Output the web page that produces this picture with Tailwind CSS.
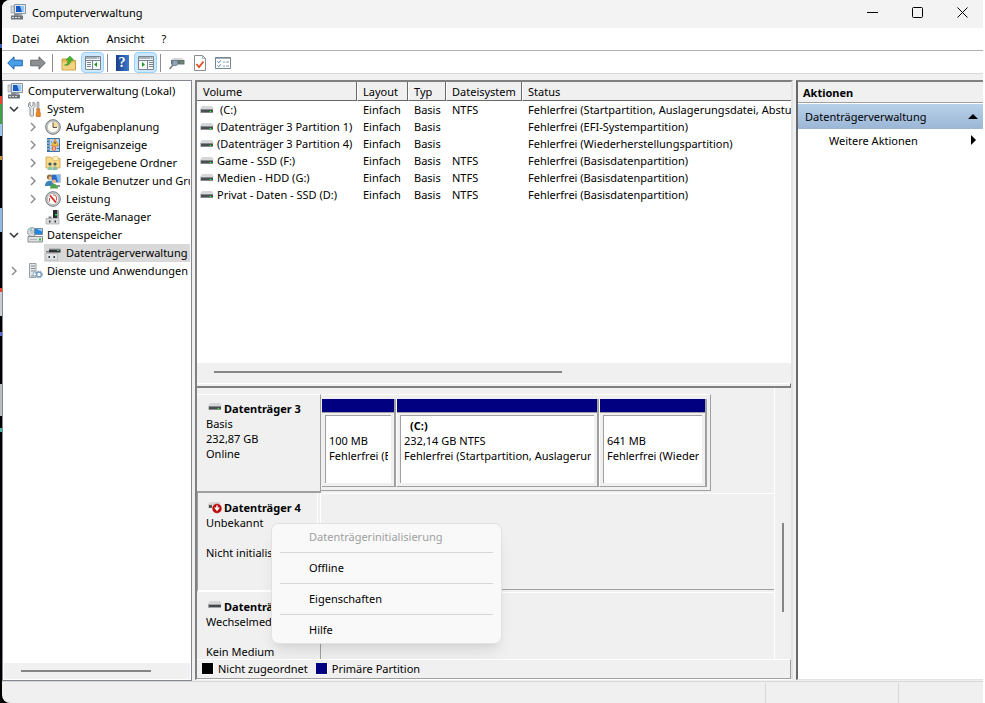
<!DOCTYPE html>
<html lang="de">
<head>
    <meta charset="utf-8">
    <title>Computerverwaltung</title>
    <script src="https://cdn.jsdelivr.net/npm/@tailwindcss/browser@4"></script>
</head>
<body class="h-screen overflow-hidden flex bg-white text-black text-[11px] leading-[15px] font-['Noto_Sans','Open_Sans',sans-serif]">
    <!-- Icon set -->
    <svg class="hidden">
        <symbol id="computer" viewBox="0 0 16 16">
            <path d="M1 2h3v7H1z" fill="#d5dbe0" stroke="#8b949b" stroke-width=".6"/>
            <path d="M4.500.5h11v9h-11z" fill="#dfe6ec" stroke="#8796a5"/>
            <path d="M6 2h8v6H6z" fill="#1a59c4"/>
            <path d="M10 2h4v6h-2z" fill="#8fc6f5"/>
            <path d="M8 10h4v1.500H8z" fill="#9aa4ad"/>
            <path d="M1 11.500h12v4H1z" fill="#6c7378"/>
            <path d="M4 10h5v2H4z" fill="#83898d"/>
            <path d="M2 13.500h2m1 0h2m1 0h2" stroke="#d8dcdf"/>
        </symbol>
        <symbol id="tools" viewBox="0 0 16 16">
            <path d="M3 1v3l1.500 1.500L6 4V1l2 1.500v3L6.500 7v7.500c0 1-3.500 1-3.500 0V7L1.500 5.500v-3z" fill="#e3e6e8" stroke="#767c80" stroke-width=".8"/>
            <path d="M10 1h2v7h-2z" fill="#c3c8cb" stroke="#6f767b" stroke-width=".5"/>
            <path d="M9.500 8h3.500l-.5 2 .8 2v3.500H9.200V12l.8-2z" fill="#f08a24" stroke="#b65a0c" stroke-width=".6"/>
        </symbol>
        <symbol id="clock" viewBox="0 0 16 16">
            <circle cx="8" cy="8" r="7.300" fill="#c9cdd0" stroke="#70767a"/>
            <circle cx="8" cy="8" r="5.600" fill="#fffdf2" stroke="#a5a9ac" stroke-width=".6"/>
            <path d="M8 8V2.800A5.200 5.200 0 0 1 13.200 8z" fill="#f7d896"/>
            <path d="M8 3.500V8.500h4" fill="none" stroke="#555"/>
        </symbol>
        <symbol id="events" viewBox="0 0 16 16">
            <path d="M2.500 1.500h12v13h-12z" fill="#b9d4ee" stroke="#3d6f9f"/>
            <path d="M2 1h2.500v14H2z" fill="#386a9d"/>
            <path d="M1 3h3M1 6h3M1 9h3M1 12h3" stroke="#d8e1ea"/>
            <path d="M10 2l3.500 7h-7z" fill="#ffc13d" stroke="#c57818" stroke-width=".6"/>
            <path d="M10 4.500v2.500" stroke="#333"/>
            <circle cx="9" cy="11.500" r="2.300" fill="#e0662d"/>
            <path d="M9 10v3" stroke="#fff"/>
            <path d="M6 5h1M12 11.500h2" stroke="#3d6f9f"/>
        </symbol>
        <symbol id="shared" viewBox="0 0 16 16">
            <path d="M1 2h5l1 1.500h8V13H1z" fill="#f7d988" stroke="#c59a37" stroke-width=".7"/>
            <path d="M8 1.500h5v4H8z" fill="#fff1c0" stroke="#d5af55" stroke-width=".5"/>
            <circle cx="5" cy="9" r="1.600" fill="#35515c"/>
            <circle cx="10" cy="9" r="1.600" fill="#4a5660"/>
            <path d="M2.500 15c0-5 5-5 5 0z" fill="#8cc7a9"/>
            <path d="M7.500 15c0-5 5-5 5 0z" fill="#8cbfa5"/>
        </symbol>
        <symbol id="users" viewBox="0 0 16 16">
            <path d="M6.500 1.500h9v8h-9z" fill="#286bcd" stroke="#bac7d4"/>
            <path d="M11 2h4v7h-2z" fill="#7db9ef"/>
            <circle cx="4.500" cy="4" r="2.600" fill="#8f6a43"/>
            <circle cx="5.200" cy="5" r="1.700" fill="#e7ba8d"/>
            <path d="M0 13c0-7 9-7 9 0z" fill="#3d84bb"/>
            <circle cx="9" cy="8.500" r="2.100" fill="#e7ba8d"/>
            <path d="M5 15.500c0-6 8-6 8 0z" fill="#52a44a"/>
            <path d="M12 12h3v2h-3z" fill="#8d969d"/>
        </symbol>
        <symbol id="gauge" viewBox="0 0 16 16">
            <circle cx="8" cy="8" r="7.300" fill="#d5d8da" stroke="#70767a"/>
            <circle cx="8" cy="8" r="5.600" fill="#fff" stroke="#8f9598" stroke-width=".6"/>
            <path d="M5 4.500l6 7" stroke="#d62516" stroke-width="1.800"/>
            <path d="M4.500 10.500V7m3.500-3h2L11.500 6v3.500" fill="none" stroke="#c4331f" stroke-width=".8"/>
        </symbol>
        <symbol id="device" viewBox="0 0 16 16">
            <path d="M8 1h4.500v8H8z" fill="#292c2e"/>
            <path d="M12.500 1H14v8h-1.500z" fill="#a2a6a9"/>
            <path d="M10 5h2v1.500h-2z" fill="#27d637"/>
            <path d="M3.500 7.500h3v2h-3z" fill="#777c80"/>
            <path d="M1 9.500h13v5.500H1z" fill="#d7d9da" stroke="#9b9fa1" stroke-width=".6"/>
            <path d="M4 11.500h1.500v2H4zm5.500 0H11v2H9.500z" fill="#35383a"/>
        </symbol>
        <symbol id="storage" viewBox="0 0 16 16">
            <circle cx="5" cy="5" r="4.500" fill="#dadddf" stroke="#7b8286" stroke-width=".7"/>
            <path d="M5 5L1.500 2.500A4.500 4.500 0 0 1 5 .5z" fill="#9cc"/>
            <circle cx="5" cy="5" r="1.300" fill="#fff" stroke="#7b8286" stroke-width=".6"/>
            <path d="M7.500 1.500h8v6h-8z" fill="#2485dc" stroke="#7a8d9e"/>
            <path d="M10 2h5v2.500z" fill="#98d2fb"/>
            <path d="M1 9.500h14.500V15H1z" fill="#dcdfe1" stroke="#71777b" stroke-width=".8"/>
            <path d="M3 12.500h7" stroke="#b0b4b6"/>
            <path d="M12 11.500h2v2h-2z" fill="#22bf35"/>
        </symbol>
        <symbol id="diskmgr" viewBox="0 0 16 16">
            <path d="M4 3h11.500v1.500H4z" fill="#b9bcbe"/>
            <path d="M4 4.500h11.500v3H4z" fill="#303335"/>
            <path d="M12 5.500h2" stroke="#62b56b"/>
            <path d="M1 8.500h11.500V15H1z" fill="#e3e4e5" stroke="#a1a4a6" stroke-width=".6"/>
            <path d="M3.500 11H5v2H3.500zm5 0H10v2H8.500z" fill="#35383a"/>
            <path d="M1 6h3v1.500H1z" fill="#777c80"/>
        </symbol>
        <symbol id="services" viewBox="0 0 16 16">
            <path d="M2.500.5H9v14H2.500z" fill="#e3e6e8" stroke="#81888d" stroke-width=".8"/>
            <path d="M4 3h4M4 5.500h4M4 8h4M4 13h3" stroke="#858d92"/>
            <circle cx="8" cy="11" r="1.800" fill="#fff" stroke="#7ba0c2" stroke-width="1.200" stroke-dasharray="1.300 .5"/>
            <circle cx="12" cy="11.500" r="2.400" fill="#fff" stroke="#7ba0c2" stroke-width="1.500"/>
            <circle cx="12" cy="11.500" r="3.400" fill="none" stroke="#7ba0c2" stroke-dasharray="1.400 1.400"/>
        </symbol>
        <symbol id="drive" viewBox="0 0 14 8">
            <path d="M2 0h10l2 3H0z" fill="#d5d7d8"/>
            <path d="M0 3h13v4H0z" fill="#c4c6c8"/>
            <path d="M1 3.500h12v3H1z" fill="#4a4e51"/>
            <path d="M10 5h1v1h-1z" fill="#37f24b"/>
            <path d="M9 5h1v1H9zm2 0h1v1h-1z" fill="#218b2c"/>
        </symbol>
        <symbol id="drive-off" viewBox="0 0 14 13">
            <path d="M2 1h10v3H0z" fill="#d5d7d8"/>
            <path d="M0 3h4v4H0z" fill="#ccc"/>
            <path d="M1 4h3v3H1z" fill="#555"/>
            <circle cx="9" cy="7.500" r="4.900" fill="#b90b0b" stroke="#fff" stroke-width=".4"/>
            <path d="M8.250 4.500h1.500v2h2.250L9 10.200 6 6.500h2.250z" fill="#fff"/>
        </symbol>
        <symbol id="drive-rem" viewBox="0 0 14 8">
            <path d="M2 0h10l2 3H0z" fill="#d5d7d8"/>
            <path d="M0 3h13v4H0z" fill="#a4a7a9"/>
            <path d="M1 4h12v2H1z" fill="#44484b"/>
        </symbol>
        <symbol id="arrow" viewBox="0 0 16 14">
            <path d="M.7 7L7 .8v3.400h8.300v5.600H7v3.400z"/>
        </symbol>
        <symbol id="folder-up" viewBox="0 0 16 16">
            <path d="M1 4h5l1 1.500h7.500V15H1z" fill="#e9bd56" stroke="#b88d30" stroke-width=".8"/>
            <path d="M1.500 7.500h12.500V14.500H1.500z" fill="#f3d382"/>
            <path d="M3.500 10c2.500 0 3.500-2 3.500-5H5L9 1l3.500 4H10c0 4-3 6-6.500 5z" fill="#42b82d" stroke="#2b8120" stroke-width=".5"/>
        </symbol>
        <symbol id="panel" viewBox="0 0 16 14">
            <path d="M.5.5h15v13H.5z" fill="#f5f7f8" stroke="#76858f"/>
            <path d="M1 1h14v2H1z" fill="#a8b2b9"/>
            <path d="M12 2h1m1 0h1" stroke="#fff"/>
            <path d="M1 4.500h14" stroke="#76858f"/>
        </symbol>
        <symbol id="chev-down" viewBox="0 0 10 6">
            <path d="M1 1l4 4 4-4" fill="none" stroke="#333" stroke-width="1.500"/>
        </symbol>
        <symbol id="chev-right" viewBox="0 0 6 10">
            <path d="M1 1l4 4-4 4" fill="none" stroke="#888" stroke-width="1.400"/>
        </symbol>
    </svg>

    <!-- Desktop strip left of the window -->
    <div class="w-0.5 shrink-0 bg-black">
        <div class="mt-11 h-1 bg-[#3b5bb5]"></div>
        <div class="mt-12 h-2 bg-[#e8452c]"></div>
        <div class="h-5 bg-[#3fa046]"></div>
        <div class="h-3 bg-[#9cc7ec]"></div>
        <div class="mt-5 h-1 bg-[#c98b3a]"></div>
        <div class="mt-12 h-6 bg-[#8fbbe4]"></div>
        <div class="mt-14 h-1 bg-[#e8452c]"></div>
        <div class="h-6 bg-[#c8ced4]"></div>
        <div class="mt-4 h-1 bg-[#5a6ad0]"></div>
        <div class="mt-12 h-8 bg-[#b9bcc0]"></div>
        <div class="mt-3 h-1 bg-[#4ab0a0]"></div>
    </div>

    <div class="flex-1 min-w-0 mr-0.5 bg-black">
    <div class="h-full flex flex-col rounded-l-lg overflow-hidden bg-[#f0f0f0]">
        <!-- Title bar -->
        <header class="h-7 shrink-0 flex items-center bg-[#f3f3f3] pl-2 pb-1">
            <svg class="size-4 mr-1.5"><use href="#computer"/></svg>
            <h1 class="flex-1">Computerverwaltung</h1>
            <button aria-label="Minimieren" class="w-[45px] h-6 flex items-center justify-center"><svg class="w-[11px] h-[11px]" viewBox="0 0 11 11"><path d="M0 5.500h11" stroke="#000"/></svg></button>
            <button aria-label="Maximieren" class="w-[45px] h-6 flex items-center justify-center"><svg class="w-[11px] h-[11px]" viewBox="0 0 11 11"><rect x=".5" y=".5" width="10" height="10" rx="1" fill="none" stroke="#000"/></svg></button>
            <button aria-label="Schließen" class="w-[41px] h-6 ml-0.5 flex items-center justify-center"><svg class="w-[11px] h-[11px]" viewBox="0 0 11 11"><path d="M.5.5l10 10m0-10l-10 10" stroke="#000"/></svg></button>
        </header>

        <!-- Menu bar -->
        <nav class="h-[23px] shrink-0 flex items-center gap-[17px] bg-white border-b border-[#b0b0b0] pl-2.5 pb-0.5">
            <button>Datei</button>
            <button>Aktion</button>
            <button>Ansicht</button>
            <button>?</button>
        </nav>

        <!-- Toolbar -->
        <div class="h-[23px] shrink-0 flex items-center gap-px bg-white border-b border-[#d9d9d9] pl-0.5 pt-px">
            <button aria-label="Zurück" class="w-[22px] flex justify-center"><svg class="w-4 h-3.5 fill-[#4a9fe8] stroke-[#1c62ad]"><use href="#arrow"/></svg></button>
            <button aria-label="Vorwärts" class="w-[22px] flex justify-center"><svg class="w-4 h-3.5 -scale-x-100 fill-[#8d9093] stroke-[#66696c]"><use href="#arrow"/></svg></button>
            <div class="w-px h-[18px] ml-0.5 mr-1 bg-[#8d8d8d]"></div>
            <button aria-label="Übergeordnet" class="w-[22px] flex justify-center"><svg class="size-4"><use href="#folder-up"/></svg></button>
            <button aria-label="Konsolenstruktur" class="w-[23px] h-[21px] flex items-center justify-center rounded-sm border border-[#99d1ff] bg-[#cce8ff]">
                <svg class="w-4 h-3.5 shrink-0" viewBox="0 0 16 14"><use href="#panel"/><path d="M7.500 5v8M2 6.500h4M2 8.500h4M2 10.500h4" stroke="#76858f"/><path d="M12 6v5L9 8.500z" fill="#219a28"/></svg>
            </button>
            <div class="w-px h-[18px] ml-0.5 mr-0.5 bg-[#8d8d8d]"></div>
            <button aria-label="Hilfe" class="w-[22px] flex justify-center"><span class="w-[13px] h-4 bg-linear-to-r from-[#1c3f87] to-[#3c79cf] text-white text-[14px] leading-4 font-bold font-['Liberation_Serif',serif]">?</span></button>
            <button aria-label="Aktionsbereich" class="w-[23px] h-[21px] flex items-center justify-center rounded-sm border border-[#99d1ff] bg-[#cce8ff]">
                <svg class="w-4 h-3.5 shrink-0" viewBox="0 0 16 14"><use href="#panel"/><path d="M9.500 5v8M11 6.500h4M11 8.500h4M11 10.500h4" stroke="#76858f"/><path d="M4 6v5l3-2.500z" fill="#219a28"/></svg>
            </button>
            <div class="w-px h-[18px] ml-0.5 mr-1 bg-[#8d8d8d]"></div>
            <button aria-label="Datenträger" class="w-[22px] flex justify-center">
                <svg class="size-4" viewBox="0 0 16 16"><path d="M4 3h9l2.500 2.500H2z" fill="#d5d7d8"/><path d="M2 5h13.500v4.500H2z" fill="#6d7275"/><path d="M12 7h2" stroke="#2ad53b"/><circle cx="6" cy="8" r="2.800" fill="#8fa5b5" stroke="#6b7e8d" stroke-width=".8"/><path d="M4 10l-3.500 4" stroke="#777" stroke-width="1.500"/></svg>
            </button>
            <button aria-label="Prüfen" class="w-[22px] flex justify-center">
                <svg class="size-4" viewBox="0 0 16 16"><path d="M2.500.5h8L13.500 3.500v12h-11z" fill="#fdfdfd" stroke="#8a8d90"/><path d="M10.500.5v3h3" fill="none" stroke="#8a8d90" stroke-width=".7"/><path d="M4.500 9l2.500 3 4.500-5.500" fill="none" stroke="#e2501b" stroke-width="1.800"/></svg>
            </button>
            <button aria-label="Eigenschaften" class="w-[22px] flex justify-center">
                <svg class="size-4" viewBox="0 0 16 16"><path d="M.5 2.500h15v11H.5z" fill="#fff" stroke="#76858f"/><path d="M1 3.500h14" stroke="#a5b0b7"/><path d="M2.500 6.500l1.200 1.200L6 5.400M2.500 10.500l1.200 1.200L6 9.400" fill="none" stroke="#2f7fd0"/><path d="M8 7h2m1 0h3M8 11h2m1 0h3" stroke="#8a979f"/></svg>
            </button>
        </div>

        <div class="flex-1 min-h-0 flex gap-[3px] pt-1.5">
            <!-- Console tree -->
            <aside class="w-[190px] shrink-0 flex flex-col bg-white border border-[#828790] p-px">
                <ul class="flex-1 overflow-hidden leading-[18px] whitespace-nowrap">
                    <li class="flex items-center gap-[5px] pl-[3px]"><svg class="size-4 shrink-0"><use href="#computer"/></svg>Computerverwaltung (Lokal)</li>
                    <li class="flex items-center pl-[5px]"><svg class="w-[10px] h-1.5 mr-2 shrink-0"><use href="#chev-down"/></svg><svg class="size-4 mr-1 shrink-0"><use href="#tools"/></svg>System</li>
                    <li class="flex items-center pl-[26px]"><svg class="w-1.5 h-2.5 mr-[9px] shrink-0"><use href="#chev-right"/></svg><svg class="size-4 mr-[5px] shrink-0"><use href="#clock"/></svg>Aufgabenplanung</li>
                    <li class="flex items-center pl-[26px]"><svg class="w-1.5 h-2.5 mr-[9px] shrink-0"><use href="#chev-right"/></svg><svg class="size-4 mr-[5px] shrink-0"><use href="#events"/></svg>Ereignisanzeige</li>
                    <li class="flex items-center pl-[26px]"><svg class="w-1.5 h-2.5 mr-[9px] shrink-0"><use href="#chev-right"/></svg><svg class="size-4 mr-[5px] shrink-0"><use href="#shared"/></svg>Freigegebene Ordner</li>
                    <li class="flex items-center pl-[26px]"><svg class="w-1.5 h-2.5 mr-[9px] shrink-0"><use href="#chev-right"/></svg><svg class="size-4 mr-[5px] shrink-0"><use href="#users"/></svg>Lokale Benutzer und Gruppen</li>
                    <li class="flex items-center pl-[26px]"><svg class="w-1.5 h-2.5 mr-[9px] shrink-0"><use href="#chev-right"/></svg><svg class="size-4 mr-[5px] shrink-0"><use href="#gauge"/></svg>Leistung</li>
                    <li class="flex items-center pl-[41px]"><svg class="size-4 mr-[5px] shrink-0"><use href="#device"/></svg>Geräte-Manager</li>
                    <li class="flex items-center pl-[5px]"><svg class="w-[10px] h-1.5 mr-2 shrink-0"><use href="#chev-down"/></svg><svg class="size-4 mr-1 shrink-0"><use href="#storage"/></svg>Datenspeicher</li>
                    <li class="flex items-center ml-10 pl-px bg-[#d9d9d9]"><svg class="size-4 mr-[5px] shrink-0"><use href="#diskmgr"/></svg>Datenträgerverwaltung</li>
                    <li class="flex items-center pl-[7px]"><svg class="w-1.5 h-2.5 mr-[10px] shrink-0"><use href="#chev-right"/></svg><svg class="size-4 mr-1 shrink-0"><use href="#services"/></svg>Dienste und Anwendungen</li>
                </ul>
                <div class="h-4 shrink-0 bg-[#f0f0f0] pt-[7px] pl-[17px]"><div class="w-[130px] h-0.5 bg-[#868686]"></div></div>
            </aside>

            <!-- Volumes and disks -->
            <main class="flex-1 min-w-0 mb-px flex flex-col border-2 border-b border-t-[#808080] border-l-[#808080] border-r-[#e3e3e3] border-b-white">
                <div class="h-[281px] shrink-0 overflow-hidden bg-white">
                    <table class="w-full table-fixed border-separate border-spacing-0 text-left whitespace-nowrap">
                        <thead class="bg-[#f0f0f0]">
                            <tr class="h-[19px]">
                                <th class="w-40 p-0 pl-1.5 font-normal border-r border-b border-[#696969]">Volume</th>
                                <th class="w-[51px] p-0 pl-[5px] font-normal border-l border-l-white border-r border-b border-[#696969]">Layout</th>
                                <th class="w-[38px] p-0 pl-[5px] font-normal border-l border-l-white border-r border-b border-[#696969]">Typ</th>
                                <th class="w-[76px] p-0 pl-[5px] font-normal border-l border-l-white border-r border-b border-[#696969]">Dateisystem</th>
                                <th class="p-0 pl-[5px] font-normal border-l border-l-white border-b border-[#696969]">Status</th>
                            </tr>
                        </thead>
                        <tbody>
                            <tr class="h-[17px]">
                                <td class="p-0 pl-[3px]"><div class="flex items-center gap-[3px]"><svg class="w-3.5 h-2 shrink-0"><use href="#drive"/></svg><span class="pl-[3px]">(C:)</span></div></td>
                                <td class="p-0 pl-1.5">Einfach</td>
                                <td class="p-0 pl-1.5">Basis</td>
                                <td class="p-0 pl-1.5">NTFS</td>
                                <td class="p-0 pl-1.5 overflow-hidden">Fehlerfrei (Startpartition, Auslagerungsdatei, Absturzabbild)</td>
                            </tr>
                            <tr class="h-[17px]">
                                <td class="p-0 pl-[3px]"><div class="flex items-center gap-[3px]"><svg class="w-3.5 h-2 shrink-0"><use href="#drive"/></svg>(Datenträger 3 Partition 1)</div></td>
                                <td class="p-0 pl-1.5">Einfach</td>
                                <td class="p-0 pl-1.5">Basis</td>
                                <td class="p-0 pl-1.5"></td>
                                <td class="p-0 pl-1.5">Fehlerfrei (EFI-Systempartition)</td>
                            </tr>
                            <tr class="h-[17px]">
                                <td class="p-0 pl-[3px]"><div class="flex items-center gap-[3px]"><svg class="w-3.5 h-2 shrink-0"><use href="#drive"/></svg>(Datenträger 3 Partition 4)</div></td>
                                <td class="p-0 pl-1.5">Einfach</td>
                                <td class="p-0 pl-1.5">Basis</td>
                                <td class="p-0 pl-1.5"></td>
                                <td class="p-0 pl-1.5">Fehlerfrei (Wiederherstellungspartition)</td>
                            </tr>
                            <tr class="h-[17px]">
                                <td class="p-0 pl-[3px]"><div class="flex items-center gap-[3px]"><svg class="w-3.5 h-2 shrink-0"><use href="#drive"/></svg>Game - SSD (F:)</div></td>
                                <td class="p-0 pl-1.5">Einfach</td>
                                <td class="p-0 pl-1.5">Basis</td>
                                <td class="p-0 pl-1.5">NTFS</td>
                                <td class="p-0 pl-1.5">Fehlerfrei (Basisdatenpartition)</td>
                            </tr>
                            <tr class="h-[17px]">
                                <td class="p-0 pl-[3px]"><div class="flex items-center gap-[3px]"><svg class="w-3.5 h-2 shrink-0"><use href="#drive"/></svg>Medien - HDD (G:)</div></td>
                                <td class="p-0 pl-1.5">Einfach</td>
                                <td class="p-0 pl-1.5">Basis</td>
                                <td class="p-0 pl-1.5">NTFS</td>
                                <td class="p-0 pl-1.5">Fehlerfrei (Basisdatenpartition)</td>
                            </tr>
                            <tr class="h-[17px]">
                                <td class="p-0 pl-[3px]"><div class="flex items-center gap-[3px]"><svg class="w-3.5 h-2 shrink-0"><use href="#drive"/></svg>Privat - Daten - SSD (D:)</div></td>
                                <td class="p-0 pl-1.5">Einfach</td>
                                <td class="p-0 pl-1.5">Basis</td>
                                <td class="p-0 pl-1.5">NTFS</td>
                                <td class="p-0 pl-1.5">Fehlerfrei (Basisdatenpartition)</td>
                            </tr>
                        </tbody>
                    </table>
                </div>
                <div class="h-5 shrink-0 pt-2 pl-[17px]"><div class="w-[348px] h-0.5 bg-[#868686]"></div></div>
                <div class="h-[5px] shrink-0 border-t border-t-white border-b-2 border-b-[#808080] border-r border-r-[#696969]"></div>

                <div class="flex-1 min-h-0 flex">
                    <div class="flex-1 min-w-0 overflow-hidden border-r border-white pt-1.5 whitespace-nowrap">
                        <section class="h-[99px] flex">
                            <div class="w-[124px] shrink-0 border-t border-t-white border-r border-r-[#a0a0a0] border-b-2 border-b-[#a0a0a0] pt-1.5 pl-[9px]">
                                <h2 class="flex items-start gap-0.5 font-bold"><svg class="w-3.5 h-2 ml-0.5 mt-0.5"><use href="#drive"/></svg>Datenträger 3</h2>
                                <p>Basis</p>
                                <p>232,87 GB</p>
                                <p>Online</p>
                            </div>
                            <div class="w-[390px] h-[97px] flex border-t border-t-white border-r border-b border-[#a0a0a0] pt-1 pr-[3px] pb-[3px] pl-px">
                                <div class="w-[74px] shrink-0 flex flex-col border-r-2 border-b border-[#a0a0a0]">
                                    <div class="h-3.5 shrink-0 bg-[#000080] border-b border-[#a0a0a0]"></div>
                                    <div class="flex-1 mt-0.5 mx-[3px] mb-[3px] overflow-hidden bg-white border-t border-l border-[#a0a0a0] pt-[17px] pl-[3px] pr-[3px]"><p class="overflow-hidden">100 MB</p><p class="overflow-hidden">Fehlerfrei (EFI-Systempartition)</p></div>
                                </div>
                                <div class="w-[203px] shrink-0 flex flex-col border-l border-l-white border-r-2 border-b border-[#a0a0a0]">
                                    <div class="h-3.5 shrink-0 bg-[#000080] border-b border-[#a0a0a0]"></div>
                                    <div class="flex-1 mt-0.5 mx-[3px] mb-[3px] overflow-hidden bg-white border-t border-l border-[#a0a0a0] pt-0.5 pl-[3px] pr-[3px]"><p class="font-bold pl-1.5">(C:)</p><p class="overflow-hidden">232,14 GB NTFS</p><p class="overflow-hidden">Fehlerfrei (Startpartition, Auslagerungsdatei)</p></div>
                                </div>
                                <div class="flex-1 min-w-0 flex flex-col border-l border-l-white border-r-2 border-b border-[#a0a0a0]">
                                    <div class="h-3.5 shrink-0 bg-[#000080] border-b border-[#a0a0a0]"></div>
                                    <div class="flex-1 mt-0.5 mx-[3px] mb-[3px] overflow-hidden bg-white border-t border-l border-[#a0a0a0] pt-[17px] pl-[3px] pr-[3px]"><p class="overflow-hidden">641 MB</p><p class="overflow-hidden">Fehlerfrei (Wiederherstellungspartition)</p></div>
                                </div>
                            </div>
                        </section>
                        <section class="h-[99px] flex">
                            <div class="w-[121px] shrink-0 overflow-hidden border-l border-l-[#a0a0a0] border-r border-r-white border-b-2 border-b-white pt-[7px] pl-2">
                                <h2 class="flex items-center gap-0.5 font-bold"><svg class="w-3.5 h-[13px] ml-0.5"><use href="#drive-off"/></svg>Datenträger 4</h2>
                                <p>Unbekannt</p>
                                <p class="mt-[15px]">Nicht initialisiert</p>
                            </div>
                            <div class="flex-1 h-[97px] ml-0.5 border-t border-l border-white border-b border-b-[#a0a0a0]"></div>
                        </section>
                        <section class="h-[99px] flex">
                            <div class="w-[124px] shrink-0 overflow-hidden border-r border-r-[#a0a0a0] pt-[7px] pl-[9px]">
                                <h2 class="flex items-start gap-0.5 font-bold"><svg class="w-3.5 h-2 ml-0.5 mt-0.5"><use href="#drive-rem"/></svg>Datenträger 5</h2>
                                <p>Wechselmedium (E:)</p>
                                <p class="mt-[15px]">Kein Medium</p>
                            </div>
                            <div class="flex-1 border-t border-white"></div>
                        </section>
                    </div>
                    <div class="w-4 shrink-0 pt-[135px] pl-[7px]"><div class="w-0.5 h-[89px] bg-[#868686]"></div></div>
                </div>
                <footer class="h-5 shrink-0 flex items-center border-t border-t-white border-r border-b border-[#a0a0a0] pl-[5px] pb-px">
                    <span class="size-3 mr-1 bg-black border-r border-b border-white"></span>Nicht zugeordnet
                    <span class="size-3 ml-2 mr-1 bg-[#000080] border-r border-b border-white"></span>Primäre Partition
                </footer>
            </main>

            <!-- Actions -->
            <aside class="w-[187px] shrink-0 mb-px bg-white border-t-2 border-l-2 border-t-[#808080] border-l-[#696969] border-b border-b-[#e3e3e3]">
                <h2 class="h-[21px] flex items-center bg-[#f0f0f0] border-b border-[#a0a0a0] pl-[5px] font-bold">Aktionen</h2>
                <button class="w-full h-[25px] mt-px flex items-center justify-between bg-linear-to-b from-[#b8d0e9] to-[#9bb6d6] pl-[7px] pr-[5px]">Datenträgerverwaltung<svg class="w-[10px] h-[5px]" viewBox="0 0 10 5"><path d="M5 0l5 5H0z"/></svg></button>
                <button class="w-full h-[22px] flex items-center justify-between pl-[31px] pr-[7px]">Weitere Aktionen<svg class="w-[5px] h-[10px]" viewBox="0 0 5 10"><path d="M0 0l5 5-5 5z"/></svg></button>
            </aside>
        </div>

        <!-- Status bar -->
        <div class="h-[22px] shrink-0 flex justify-end border-t border-[#d7d7d7]">
            <div class="w-[133px] mt-px border-l border-[#d7d7d7]"></div>
            <div class="w-[85px] mt-px border-l border-[#d7d7d7]"></div>
        </div>
    </div>
    </div>

    <!-- Context menu -->
    <div role="menu" class="absolute left-[272px] top-[524px] w-[229px] rounded-md bg-[#f9f9f9] outline outline-[#e2e2e2] shadow-lg px-2">
        <button role="menuitem" disabled class="w-full h-7 flex items-center pl-[29px] pb-[3px] text-[#a0a0a0]">Datenträgerinitialisierung</button>
        <button role="menuitem" class="w-full h-[31px] flex items-center border-t border-[#d7d7d7] pl-[29px] pb-0.5">Offline</button>
        <button role="menuitem" class="w-full h-[31px] flex items-center border-t border-[#d7d7d7] pl-[29px] pb-0.5">Eigenschaften</button>
        <button role="menuitem" class="w-full h-[29px] flex items-center border-t border-[#d7d7d7] pl-[29px]">Hilfe</button>
    </div>
</body>
</html>
